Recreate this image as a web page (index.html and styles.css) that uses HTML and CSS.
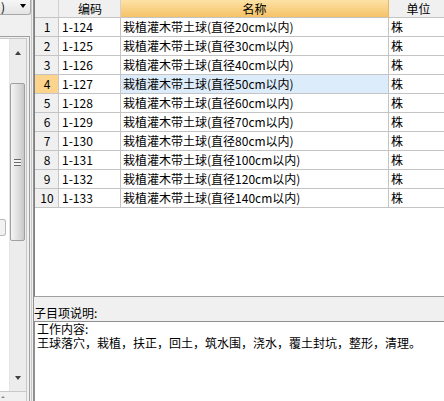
FILE: index.html
```html
<!DOCTYPE html>
<html>
<head>
<meta charset="utf-8">
<link rel="stylesheet" href="styles.css">
</head>
<body>
<div class="app">
  <div class="left">
    <div class="combo"><span class="combo-text">)</span><span class="combo-arrow"></span></div>
    <div class="gap"></div>
    <div class="listbox">
      <div class="list-inner">
        <div class="list-content"><div class="mini-btn"></div></div>
        <div class="vscroll">
          <div class="sb-btn"><span class="tri-up"></span></div>
          <div class="sb-track-top"></div>
          <div class="sb-thumb"><span class="grip"></span></div>
          <div class="sb-track-bot"></div>
          <div class="sb-btn"><span class="tri-down"></span></div>
        </div>
      </div>
      <div class="list-foot"><span class="foot-mark"></span></div>
    </div>
  </div>
  <div class="splitter"></div>
  <div class="right">
    <div class="grid-area">
      <div class="row head">
        <div class="c num"></div>
        <div class="c code">编码</div>
        <div class="c name sel-head">名称</div>
        <div class="c unit">单位</div>
      </div>
      <div class="row"><div class="c num">1</div><div class="c code">1-124</div><div class="c name">栽植灌木带土球(直径20cm以内)</div><div class="c unit">株</div></div>
      <div class="row"><div class="c num">2</div><div class="c code">1-125</div><div class="c name">栽植灌木带土球(直径30cm以内)</div><div class="c unit">株</div></div>
      <div class="row"><div class="c num">3</div><div class="c code">1-126</div><div class="c name">栽植灌木带土球(直径40cm以内)</div><div class="c unit">株</div></div>
      <div class="row cur"><div class="c num">4</div><div class="c code">1-127</div><div class="c name">栽植灌木带土球(直径50cm以内)</div><div class="c unit">株</div></div>
      <div class="row"><div class="c num">5</div><div class="c code">1-128</div><div class="c name">栽植灌木带土球(直径60cm以内)</div><div class="c unit">株</div></div>
      <div class="row"><div class="c num">6</div><div class="c code">1-129</div><div class="c name">栽植灌木带土球(直径70cm以内)</div><div class="c unit">株</div></div>
      <div class="row"><div class="c num">7</div><div class="c code">1-130</div><div class="c name">栽植灌木带土球(直径80cm以内)</div><div class="c unit">株</div></div>
      <div class="row"><div class="c num">8</div><div class="c code">1-131</div><div class="c name">栽植灌木带土球(直径100cm以内)</div><div class="c unit">株</div></div>
      <div class="row"><div class="c num">9</div><div class="c code">1-132</div><div class="c name">栽植灌木带土球(直径120cm以内)</div><div class="c unit">株</div></div>
      <div class="row"><div class="c num">10</div><div class="c code">1-133</div><div class="c name">栽植灌木带土球(直径140cm以内)</div><div class="c unit">株</div></div>
    </div>
    <div class="desc-label">子目项说明:</div>
    <div class="desc-box"><div class="desc-line">工作内容:</div><div class="desc-line">王球落穴，栽植，扶正，回土，筑水围，浇水，覆土封坑，整形，清理。</div></div>
  </div>
</div>
</body>
</html>
```

FILE: styles.css
```css
* { box-sizing: border-box; }
html, body { margin: 0; padding: 0; }
body {
  width: 444px;
  height: 401px;
  overflow: hidden;
  background: #f0f0f0;
  font-family: "Noto Sans CJK SC", "Liberation Sans", sans-serif;
  font-size: 12px;
  color: #000;
}
.app {
  display: flex;
  height: 401px;
}
.left {
  width: 31px;
  flex: none;
  display: flex;
  flex-direction: column;
}
.combo {
  height: 15px;
  width: 31px;
  border: 1px solid #a8a8a8;
  border-top: none;
  border-left: none;
  border-radius: 0 0 3px 0;
  background: linear-gradient(#f6f6f6, #e4e4e4);
  display: flex;
  align-items: center;
  justify-content: space-between;
  padding: 0 4px 0 1px;
  line-height: 12px;
}
.combo-text { font-size: 12px; }
.combo-arrow {
  width: 0; height: 0;
  border-left: 3.5px solid transparent;
  border-right: 3.5px solid transparent;
  border-top: 4px solid #000;
  margin-top: -2px;
}
.gap { height: 21px; }
.listbox {
  flex: 1;
  width: 30px;
  border-top: 1px solid #a0a0a0;
  border-right: 1px solid #a0a0a0;
  display: flex;
  flex-direction: column;
  background: #f0f0f0;
}
.list-inner {
  flex: 1;
  display: flex;
  width: 27px;
  margin-top: 1px;
  border-top: 1px solid #c8c8c8;
  border-right: 1px solid #c8c8c8;
  background: #fff;
}
.list-content {
  width: 9px;
  flex: none;
  display: flex;
  flex-direction: column;
  justify-content: flex-start;
  padding-top: 180px;
}
.mini-btn {
  width: 6px;
  height: 17px;
  border: 1px solid #b8b8b8;
  border-left: none;
  border-radius: 0 3px 3px 0;
  background: #f2f2f2;
}
.vscroll {
  width: 17px;
  flex: none;
  display: flex;
  flex-direction: column;
  background: #ececec;
  border-left: 1px solid #e4e4e4;
}
.sb-btn {
  height: 27px;
  display: flex;
  align-items: center;
  justify-content: center;
}
.tri-up {
  width: 0; height: 0;
  border-left: 3.5px solid transparent;
  border-right: 3.5px solid transparent;
  border-bottom: 4px solid #404040;
}
.tri-down {
  width: 0; height: 0;
  border-left: 3.5px solid transparent;
  border-right: 3.5px solid transparent;
  border-top: 4px solid #404040;
}
.sb-track-top { height: 17px; }
.sb-thumb {
  height: 158px;
  margin: 0 1px 0 0;
  border: 1px solid #a0a0a0;
  border-radius: 2px;
  background: linear-gradient(90deg, #f4f4f4, #dcdcdc 60%, #c8c8c8);
  display: flex;
  align-items: center;
  justify-content: center;
}
.grip {
  width: 7px;
  height: 7px;
  border-top: 1px solid #6a6a6a;
  border-bottom: 1px solid #6a6a6a;
  background: linear-gradient(#f4f4f4 0 2px, #6a6a6a 2px 3px, #f4f4f4 3px);
}
.sb-track-bot { flex: 1; }
.list-foot {
  height: 10px;
  width: 27px;
  border-top: 1px solid #c8c8c8;
  border-right: 1px solid #c8c8c8;
  background: #f0f0f0;
  position: relative;
}
.foot-mark {
  position: absolute;
  left: 1px;
  top: 4px;
  width: 0; height: 0;
  border-left: 2px solid transparent;
  border-right: 2px solid transparent;
  border-bottom: 2px solid #888;
}
.splitter {
  width: 3px;
  flex: none;
  border-right: 1px solid #909090;
  border-left: 1px solid #c8c8c8;
}
.right {
  flex: 1;
  display: flex;
  flex-direction: column;
  min-width: 0;
}
.grid-area {
  height: 297px;
  flex: none;
  background: #fff;
  border-left: 1px solid #808080;
  border-bottom: 1px solid #a0a0a0;
}
.row {
  display: grid;
  grid-template-columns: 24px 62px 268px 60px;
  height: 19px;
}
.row.head { height: 18px; }
.c {
  border-right: 1px solid #c4c4c4;
  border-bottom: 1px solid #c4c4c4;
  line-height: 18px;
  padding: 0 2px;
  white-space: nowrap;
  overflow: hidden;
}
.head .c {
  background: #f0f0f0;
  text-align: center;
  line-height: 17px;
  border-right-color: #d0d0d0;
}
.head .c.sel-head {
  background: linear-gradient(#fde2a6, #f5c267);
  border-right-color: #e8b860;
}
.c.num {
  background: #f0f0f0;
  text-align: center;
  padding: 0 0 0 1px;
}
.c.code { padding-left: 3px; }
.cur .c.num { background: #fcd48c; }
.cur .c.name { background: #ddecfb; }
.desc-label {
  height: 24px;
  padding: 9px 0 0 0;
  line-height: 14px;
}
.desc-box {
  flex: 1;
  background: #fff;
  border-top: 1px solid #909090;
  border-left: 1px solid #909090;
  padding: 0 0 0 2px;
  white-space: nowrap;
}
.desc-line {
  height: 14px;
  line-height: 14px;
}
```
